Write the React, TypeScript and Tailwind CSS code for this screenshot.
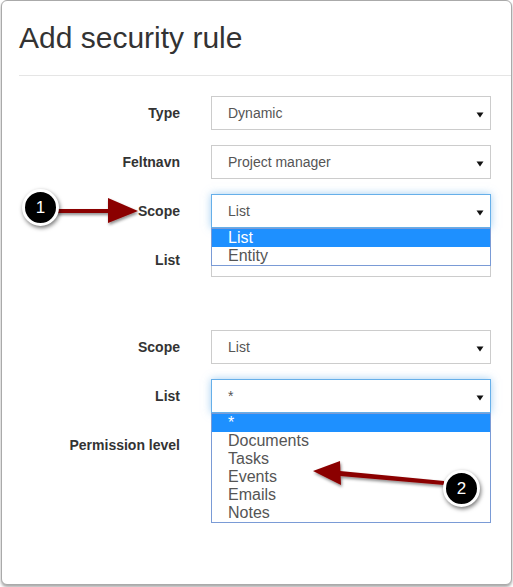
import React from "react";

type Row = { label: string; value: string; focused?: boolean; options?: string[] };

const Caret = () => (
  <svg width="8" height="6" viewBox="0 0 8 6" className="absolute right-[6px] top-[15px]">
    <path d="M0.5 0.5 L7.5 0.5 L4 5.5 Z" fill="#111" />
  </svg>
);

const Dropdown = ({ options }: { options: string[] }) => (
  <div className="absolute left-0 top-full z-10 w-full border border-[#7a9bd6] bg-white">
    {options.map((opt, i) => (
      <div
        key={opt}
        className={
          i === 0
            ? "h-[18px] pl-[16px] leading-[18px] bg-[#1e90ff] text-white"
            : "h-[18px] pl-[16px] leading-[18px] text-[#555]"
        }
      >
        {opt}
      </div>
    ))}
  </div>
);

const SelectRow = ({ row }: { row: Row }) => (
  <div className="flex items-center h-[34px]">
    <label className="w-[178px] text-right text-[14px] font-bold text-[#333]">{row.label}</label>
    <div className="relative ml-[31px] w-[280px]">
      <div
        className={
          row.focused
            ? "relative h-[34px] border border-[#66afe9] bg-white pl-[16px] leading-[32px] text-[14px] text-[#555] shadow-[0_0_8px_rgba(102,175,233,0.6)]"
            : "relative h-[34px] border border-[#ccc] bg-white pl-[16px] leading-[32px] text-[14px] text-[#555]"
        }
      >
        {row.value}
        <Caret />
      </div>
      {row.options && <Dropdown options={row.options} />}
    </div>
  </div>
);

const topRows: Row[] = [
  { label: "Type", value: "Dynamic" },
  { label: "Feltnavn", value: "Project manager" },
  { label: "Scope", value: "List", focused: true, options: ["List", "Entity"] },
  { label: "List", value: "" },
];

const bottomRows: Row[] = [
  { label: "Scope", value: "List" },
  {
    label: "List",
    value: "*",
    focused: true,
    options: ["*", "Documents", "Tasks", "Events", "Emails", "Notes"],
  },
  { label: "Permission level", value: "" },
];

const Badge = ({ n, className }: { n: string; className: string }) => (
  <div
    className={
      "absolute z-20 flex h-[37px] w-[37px] items-center justify-center rounded-full border-[3px] border-white bg-black text-[17px] text-white shadow-[1px_2px_4px_rgba(0,0,0,0.55)] " +
      className
    }
  >
    {n}
  </div>
);

export default function App() {
  return (
    <div className="relative h-[587px] w-[513px] bg-white font-['Liberation_Sans',Arial,sans-serif]">
      <div className="ml-[1px] h-[585px] w-[511px] rounded-[6px] border border-[#aaa] bg-white shadow-[0_2px_3px_rgba(0,0,0,0.35)]">
        <div className="ml-[17px] border-b border-[#e5e5e5] pt-[20px] pb-[21px]">
          <h1 className="text-[30px] leading-[33px] font-normal text-[#333]">Add security rule</h1>
        </div>
        <div className="mt-[20px] flex flex-col gap-[15px]">
          {topRows.map((r) => (
            <SelectRow key={r.label + r.value} row={r} />
          ))}
        </div>
        <div className="mt-[53px] flex flex-col gap-[15px]">
          {bottomRows.map((r) => (
            <SelectRow key={r.label + r.value} row={r} />
          ))}
        </div>
      </div>

      <svg className="absolute left-0 top-0 z-20 pointer-events-none" width="513" height="587">
        <defs>
          <filter id="sh" x="-20%" y="-50%" width="140%" height="200%">
            <feDropShadow dx="1" dy="2" stdDeviation="1.5" floodColor="#000" floodOpacity="0.45" />
          </filter>
        </defs>
        <g filter="url(#sh)" fill="#8b0000">
          <path d="M56 209 L112 209 L112 213 L56 213 Z" />
          <path d="M108 198 L138 211 L108 223 Z" />
          <path d="M340 471 L444 481 L444 485 L340 476 Z" />
          <path d="M340 461 L313 471 L341 485 Z" />
        </g>
      </svg>

      <Badge n="1" className="left-[22px] top-[189px]" />
      <Badge n="2" className="left-[443px] top-[470px]" />
    </div>
  );
}
